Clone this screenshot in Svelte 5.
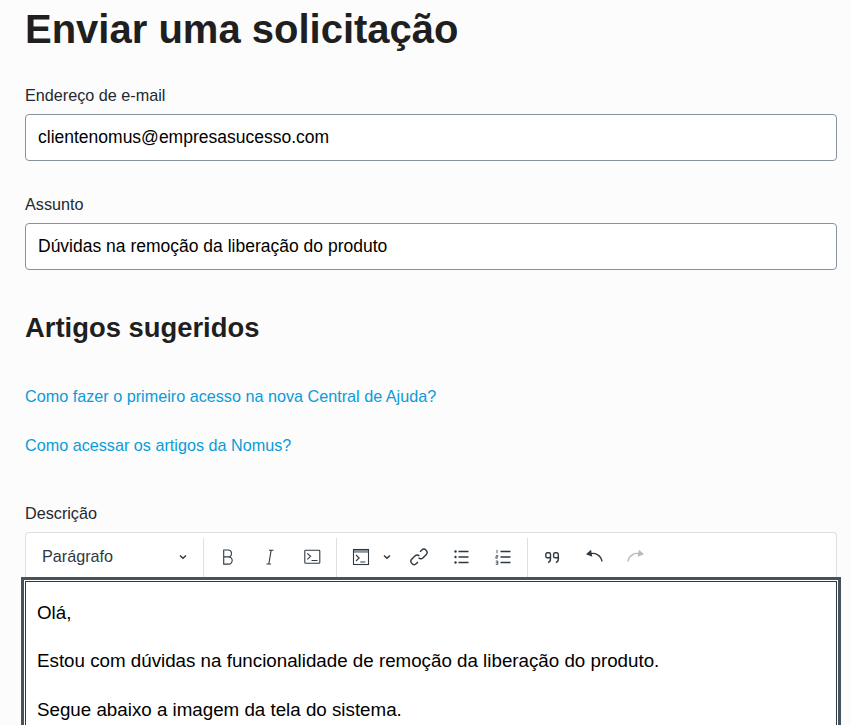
<script>
  const links = [
    'Como fazer o primeiro acesso na nova Central de Ajuda?',
    'Como acessar os artigos da Nomus?'
  ];
</script>

<main class="page">
  <h1>Enviar uma solicitação</h1>

  <div class="field first">
    <label for="email">Endereço de e-mail</label>
    <input id="email" type="text" value="clientenomus@empresasucesso.com" />
  </div>

  <div class="field second">
    <label for="subject">Assunto</label>
    <input id="subject" type="text" value="Dúvidas na remoção da liberação do produto" />
  </div>

  <h2>Artigos sugeridos</h2>
  <ul class="links">
    {#each links as link}
      <li><a href="#top">{link}</a></li>
    {/each}
  </ul>

  <div class="desc-label">Descrição</div>
  <div class="toolbar">
    <div class="select"><span>Parágrafo</span>
      <svg class="chev" viewBox="0 0 10 10"><path d="M2 3.500 5 6.300 8 3.500" /></svg>
    </div>
    <i class="sep"></i>
    <button class="tb" aria-label="Negrito"><svg viewBox="0 0 20 20"><path d="M5.700 3h4.300a3.400 3.400 0 0 1 0 6.900H5.700zM5.700 9.900h4.900a3.600 3.600 0 0 1 0 7.200H5.700z" /></svg></button>
    <button class="tb" aria-label="Itálico"><svg viewBox="0 0 20 20"><path d="M9 3.200h4.500M6.500 17h4.500M11.200 3.200 8.800 17" /></svg></button>
    <button class="tb" aria-label="Código"><svg viewBox="0 0 20 20"><rect x="2.800" y="3.300" width="15" height="13" rx=".8" /><path d="m5.300 6.300 3.300 3-3.300 3M9.500 13.500h6" /></svg></button>
    <i class="sep"></i>
    <div class="split">
      <svg viewBox="0 0 20 20"><rect class="strip" x="2.500" y="2.500" width="15" height="3.300" /><rect x="2.500" y="2.500" width="15" height="15" /><path d="m5 8 3.200 3-3.200 3M9.300 15h5" /></svg>
      <svg class="chev" viewBox="0 0 10 10"><path d="M2 3.500 5 6.300 8 3.500" /></svg>
    </div>
    <button class="tb" aria-label="Ligação"><svg viewBox="0 0 20 20"><g class="thick"><path d="M11 4.800 12.600 3.200a3.200 3.200 0 0 1 4.500 0 3.200 3.200 0 0 1 0 4.500l-3 3a3.200 3.200 0 0 1-4.500 0" /><path d="M9 15 7.400 16.600a3.200 3.200 0 0 1-4.500 0 3.200 3.200 0 0 1 0-4.500l3-3a3.200 3.200 0 0 1 4.500 0" /></g></svg></button>
    <button class="tb" aria-label="Lista"><svg viewBox="0 0 20 20"><circle class="fill" cx="4.500" cy="4.500" r="1.200" /><circle class="fill" cx="4.500" cy="10" r="1.200" /><circle class="fill" cx="4.500" cy="15.500" r="1.200" /><path class="thick" d="M7.500 4.500h10M7.500 10h10M7.500 15.500h10" /></svg></button>
    <button class="tb" aria-label="Lista numerada"><svg viewBox="0 0 20 20"><path class="num" d="M4 2.800v3.500M2.800 8.600h2v1.300h-2v1.300h2M2.800 14h2v3.400h-2M2.800 15.700h2" /><path class="thick" d="M7.500 4.500h10M7.500 10h10M7.500 15.500h10" /></svg></button>
    <i class="sep"></i>
    <button class="tb" aria-label="Citação"><svg viewBox="0 0 20 20"><g class="thick"><path d="M8.500 9.800a2 2 0 0 1-2 1H5.400a1.600 1.600 0 0 1-1.600-1.600V7.400a1.600 1.600 0 0 1 1.600-1.600h1.500a1.600 1.600 0 0 1 1.600 1.600v4.700c0 1.800-.8 3-2.400 3.600" /><path d="M16.300 9.800a2 2 0 0 1-2 1h-1.100a1.600 1.600 0 0 1-1.600-1.600V7.400a1.600 1.600 0 0 1 1.600-1.600h1.500a1.600 1.600 0 0 1 1.600 1.600v4.700c0 1.800-.8 3-2.400 3.600" /></g></svg></button>
    <button class="tb" aria-label="Desfazer"><svg viewBox="0 0 20 20"><path class="thick" d="M18 14.500C17.200 8.600 11.500 5 5.500 7" /><path class="fill" d="M2 7.300 7 2.700 8.300 9.700z" /></svg></button>
    <button class="tb off" aria-label="Refazer"><svg viewBox="0 0 20 20"><path class="thick" d="M2 14.500C2.800 8.600 8.500 5 14.500 7" /><path class="fill" d="M18 7.300 13 2.700 11.700 9.700z" /></svg></button>
  </div>
  <div class="editor">
    <p>Olá,</p>
    <p>Estou com dúvidas na funcionalidade de remoção da liberação do produto.</p>
    <p>Segue abaixo a imagem da tela do sistema.</p>
  </div>
</main>

<style>
  :global(html), :global(body) {
    margin: 0;
    height: 725px;
    overflow: hidden;
    background: #fcfcfc;
  }
  .page {
    box-sizing: border-box;
    width: 851px;
    padding: 0 14px 0 25px;
    font-family: "Liberation Sans", Arial, sans-serif;
    color: #1f1f1f;
  }
  h1 {
    margin: 0;
    padding-top: 7px;
    font-size: 40px;
    line-height: 45px;
    font-weight: 700;
    color: #1f1f1f;
  }
  label, .desc-label {
    display: block;
    font-size: 16.200px;
    line-height: 18px;
    color: #24292f;
  }
  .field.first { margin-top: 34px; }
  .field.second { margin-top: 34px; }
  input {
    display: block;
    box-sizing: border-box;
    width: 100%;
    height: 47px;
    margin-top: 10px;
    padding: 0 12px;
    border: 1px solid #87929d;
    border-radius: 4px;
    background: #fff;
    font: 17.500px "Liberation Sans", Arial, sans-serif;
    color: #000;
    outline: none;
  }
  h2 {
    margin: 41px 0 0;
    font-size: 27.400px;
    line-height: 34px;
    font-weight: 700;
    color: #1f1f1f;
  }
  .links {
    list-style: none;
    margin: 41px 0 0;
    padding: 0;
    display: flex;
    flex-direction: column;
    gap: 29px;
  }
  .links li {
    font-size: 16.200px;
    line-height: 20px;
  }
  .links a {
    color: #0a9bd8;
    text-decoration: none;
  }
  .desc-label { margin-top: 49px; }
  .toolbar {
    box-sizing: border-box;
    display: flex;
    align-items: flex-start;
    height: 45px;
    margin-top: 10px;
    padding-top: 5px;
    background: #fff;
    border: 1px solid #dedfe0;
    border-bottom: 0;
    border-radius: 4px 4px 0 0;
    color: #2f3941;
  }
  .select {
    box-sizing: border-box;
    display: flex;
    align-items: center;
    justify-content: space-between;
    width: 177px;
    height: 38px;
    padding: 0 15px 0 16px;
    font-size: 16.200px;
    color: #2f3941;
  }
  .select span { padding-bottom: 2px; }
  .sep {
    display: block;
    flex: none;
    width: 1px;
    height: 39px;
    margin: 0 3px;
    background: #dedfe0;
  }
  .select + .sep { margin-left: 0; }
  svg {
    display: block;
    flex: none;
    width: 20px;
    height: 20px;
    fill: none;
    stroke: #2f3941;
    stroke-width: 1.100;
  }
  svg.chev {
    width: 10px;
    height: 10px;
    stroke-width: 1.500;
  }
  .fill { fill: #2f3941; stroke: none; }
  .strip { fill: #8d959c; stroke: none; }
  .thick { stroke-width: 1.400; }
  .num { stroke-width: .8; }
  .tb {
    box-sizing: border-box;
    display: flex;
    align-items: center;
    justify-content: center;
    flex: none;
    width: 42px;
    height: 38px;
    padding: 0;
    border: 0;
    background: none;
  }
  .split {
    box-sizing: border-box;
    display: flex;
    align-items: center;
    gap: 11px;
    flex: none;
    width: 58px;
    height: 38px;
    padding-left: 11px;
  }
  .off svg { stroke: #b4babf; }
  .off .fill { fill: #b4babf; }
  .editor {
    box-sizing: border-box;
    height: 240px;
    margin-top: 4px;
    padding: 18.600px 11px;
    background: #fff;
    border: 1px solid #2f3941;
    box-shadow: 0 0 0 1px #fff, 0 0 0 4px #47525b;
    font-size: 18.750px;
    color: #000;
  }
  .editor p {
    margin: 0 0 24.270px;
    line-height: 24.270px;
  }
</style>
